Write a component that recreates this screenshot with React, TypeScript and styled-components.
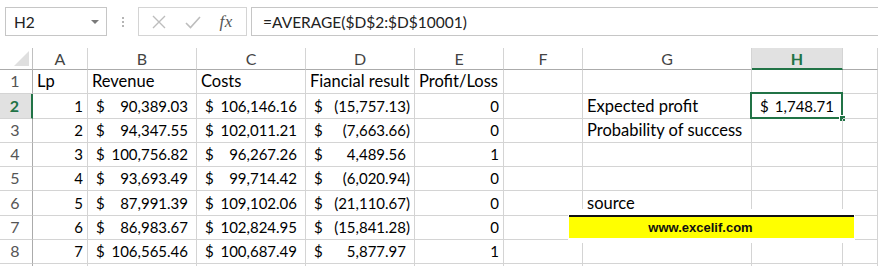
import React from 'react'
import styled, { createGlobalStyle, css } from 'styled-components'

type Value =
  | { kind: 'text'; v: string }
  | { kind: 'num'; v: string }
  | { kind: 'money'; v: string }
  | null

const t = (v: string): Value => ({ kind: 'text', v })
const n = (v: string): Value => ({ kind: 'num', v })
const m = (v: string): Value => ({ kind: 'money', v })

// the last column is cut off by the window, so its letter is not shown
const columns = ['A', 'B', 'C', 'D', 'E', 'F', 'G', 'H', '']
const widths = [33, 55, 109, 109, 109, 89, 79, 169, 91]
const rowHeights = [24, 25, 24, 24, 24, 25, 24, 24, 24]

const rows: Value[][] = [
  [t('Lp'), t('Revenue'), t('Costs'), t('Fiancial result'), t('Profit/Loss'), null, null, null, null],
  [n('1'), m('90,389.03'), m('106,146.16'), m('(15,757.13)'), n('0'), null, t('Expected profit'), m('1,748.71'), null],
  [n('2'), m('94,347.55'), m('102,011.21'), m('(7,663.66)'), n('0'), null, t('Probability of success'), null, null],
  [n('3'), m('100,756.82'), m('96,267.26'), m('4,489.56'), n('1'), null, null, null, null],
  [n('4'), m('93,693.49'), m('99,714.42'), m('(6,020.94)'), n('0'), null, null, null, null],
  [n('5'), m('87,991.39'), m('109,102.06'), m('(21,110.67)'), n('0'), null, t('source'), null, null],
  [n('6'), m('86,983.67'), m('102,824.95'), m('(15,841.28)'), n('0'), null, null, null, null],
  [n('7'), m('106,565.46'), m('100,687.49'), m('5,877.97'), n('1'), null, null, null, null],
  [null, null, null, null, null, null, null, null, null]
]

const selected = { col: 'H', row: 2 }
const visibleRows = 8

const GlobalStyle = createGlobalStyle`
  html, body {
    margin: 0;
    background: #fff;
    overflow: hidden;
  }
  body {
    font-family: Lato, "Liberation Sans", sans-serif;
    color: #000;
  }
`

const Page = styled.div`
  width: 878px;
  height: 266px;
  overflow: hidden;
`

const FormulaBar = styled.div`
  display: flex;
  align-items: stretch;
  height: 29px;
  padding: 7px 0 0 5px;
`

const NameBox = styled.div`
  box-sizing: border-box;
  width: 102px;
  border: 1px solid #c6c6c6;
  display: flex;
  align-items: center;
  justify-content: space-between;
  padding: 0 7px 0 8px;
  font-size: 15.5px;
  color: #222;
`

const Caret = styled.span`
  width: 0;
  height: 0;
  border-left: 4px solid transparent;
  border-right: 4px solid transparent;
  border-top: 4px solid #7a7a7a;
`

const Grip = styled.div`
  width: 31px;
  display: flex;
  flex-direction: column;
  align-items: center;
  justify-content: center;
  gap: 2px;
  span {
    width: 2px;
    height: 2px;
    background: #b5b5b5;
  }
`

const Buttons = styled.div`
  box-sizing: border-box;
  width: 109px;
  border: 1px solid #d4d4d4;
  display: flex;
  align-items: center;
  justify-content: space-around;
  padding: 0 4px;
`

const Fx = styled.span`
  font-family: "Liberation Serif", serif;
  font-style: italic;
  font-size: 17px;
  color: #555;
  letter-spacing: 0.5px;
`

const FormulaInput = styled.div`
  box-sizing: border-box;
  flex: 1;
  margin-left: 4px;
  border-top: 1px solid #c6c6c6;
  border-bottom: 1px solid #c6c6c6;
  border-left: 1px solid #c6c6c6;
  display: flex;
  align-items: center;
  padding-left: 11px;
  font-size: 15.5px;
  color: #222;
`

const Sheet = styled.div`
  position: relative;
  margin-top: 12px;
  display: grid;
  grid-template-columns: ${widths.map((w) => `${w}px`).join(' ')} 1fr;
  grid-template-rows: 22px ${rowHeights.map((h) => `${h}px`).join(' ')};
`

const Corner = styled.div`
  position: relative;
  border-right: 1px solid #c0c0c0;
  border-bottom: 1px solid #ababab;
  &::after {
    content: '';
    position: absolute;
    right: 3px;
    bottom: 3px;
    width: 0;
    height: 0;
    border-left: 15px solid transparent;
    border-bottom: 15px solid #dfdfdf;
  }
`

const ColHeader = styled.div<{ $active?: boolean }>`
  box-sizing: border-box;
  display: flex;
  align-items: center;
  justify-content: center;
  font-size: 16px;
  color: #444;
  border-right: 1px solid #d4d4d4;
  border-bottom: 1px solid #ababab;
  ${(p) =>
    p.$active &&
    css`
      background: #e1e1e1;
      color: #217346;
      font-weight: 700;
      border-bottom: 2px solid #217346;
    `}
`

const RowHeader = styled.div<{ $active?: boolean }>`
  box-sizing: border-box;
  display: flex;
  align-items: flex-end;
  justify-content: center;
  padding: 0 2px 3px 0;
  font-size: 16px;
  line-height: 18px;
  color: #555;
  border-right: 1px solid #ababab;
  border-bottom: 1px solid #d4d4d4;
  ${(p) =>
    p.$active &&
    css`
      background: #e1e1e1;
      color: #217346;
      font-weight: 700;
      border-right: 2px solid #217346;
    `}
`

const Cell = styled.div<{ $align: 'left' | 'right' | 'split' }>`
  position: relative;
  box-sizing: border-box;
  display: flex;
  align-items: flex-end;
  justify-content: ${(p) =>
    p.$align === 'right' ? 'flex-end' : p.$align === 'split' ? 'space-between' : 'flex-start'};
  padding: 0 4px 3px 4px;
  font-size: ${(p) => (p.$align === 'left' ? '16.5px' : '15px')};
  line-height: 18px;
  white-space: nowrap;
  border-right: 1px solid #d4d4d4;
  border-bottom: 1px solid #d4d4d4;
`

const Pad = styled.span`
  visibility: hidden;
`

const Selection = styled.div`
  position: absolute;
  left: -2px;
  top: -2px;
  right: -1px;
  bottom: -1px;
  border: 2px solid #217346;
  pointer-events: none;
  &::after {
    content: '';
    position: absolute;
    right: -5px;
    bottom: -5px;
    width: 5px;
    height: 5px;
    background: #217346;
    border: 1px solid #fff;
  }
`

const Picture = styled.div`
  position: absolute;
  left: 568px;
  top: 161px;
  width: 287px;
  height: 34px;
  background: #fff;
  padding: 6px 1px 5px;
  box-sizing: border-box;
`

const Banner = styled.div`
  height: 100%;
  background: #ffff00;
  border-top: 2px solid #111;
  box-sizing: border-box;
  display: flex;
  align-items: center;
  justify-content: center;
  padding-right: 22px;
  font-family: "Liberation Sans", Arial, sans-serif;
  font-weight: 700;
  font-size: 13px;
  color: #111;
`

function renderValue(v: Value) {
  if (!v) return null
  if (v.kind === 'money') {
    const neg = v.v.startsWith('(')
    return (
      <>
        <span>
          <Pad>(</Pad>$
        </span>
        <span>
          {v.v}
          {!neg && <Pad>)</Pad>}
        </span>
      </>
    )
  }
  return v.v
}

export default function App() {
  return (
    <Page>
      <GlobalStyle />
      <FormulaBar>
        <NameBox>
          H2
          <Caret />
        </NameBox>
        <Grip>
          <span />
          <span />
          <span />
        </Grip>
        <Buttons>
          <svg width="14" height="14" viewBox="0 0 14 14">
            <path d="M1 1 L13 13 M13 1 L1 13" stroke="#bdbdbd" strokeWidth="1.4" fill="none" />
          </svg>
          <svg width="16" height="14" viewBox="0 0 16 14">
            <path d="M1 8 L5.5 12.5 L15 2" stroke="#bdbdbd" strokeWidth="1.6" fill="none" />
          </svg>
          <Fx>fx</Fx>
        </Buttons>
        <FormulaInput>=AVERAGE($D$2:$D$10001)</FormulaInput>
      </FormulaBar>

      <Sheet>
        <Corner />
        {columns.map((c, i) => (
          <ColHeader key={i} $active={c === selected.col}>
            {c}
          </ColHeader>
        ))}
        {rows.map((row, ri) => (
          <React.Fragment key={ri}>
            <RowHeader $active={ri + 1 === selected.row}>
              {ri < visibleRows ? ri + 1 : null}
            </RowHeader>
            {row.map((v, ci) => (
              <Cell
                key={ci}
                $align={v?.kind === 'money' ? 'split' : v?.kind === 'num' ? 'right' : 'left'}
              >
                {renderValue(v)}
                {columns[ci] === selected.col && ri + 1 === selected.row && <Selection />}
              </Cell>
            ))}
          </React.Fragment>
        ))}
        <Picture>
          <Banner>www.excelif.com</Banner>
        </Picture>
      </Sheet>
    </Page>
  )
}
